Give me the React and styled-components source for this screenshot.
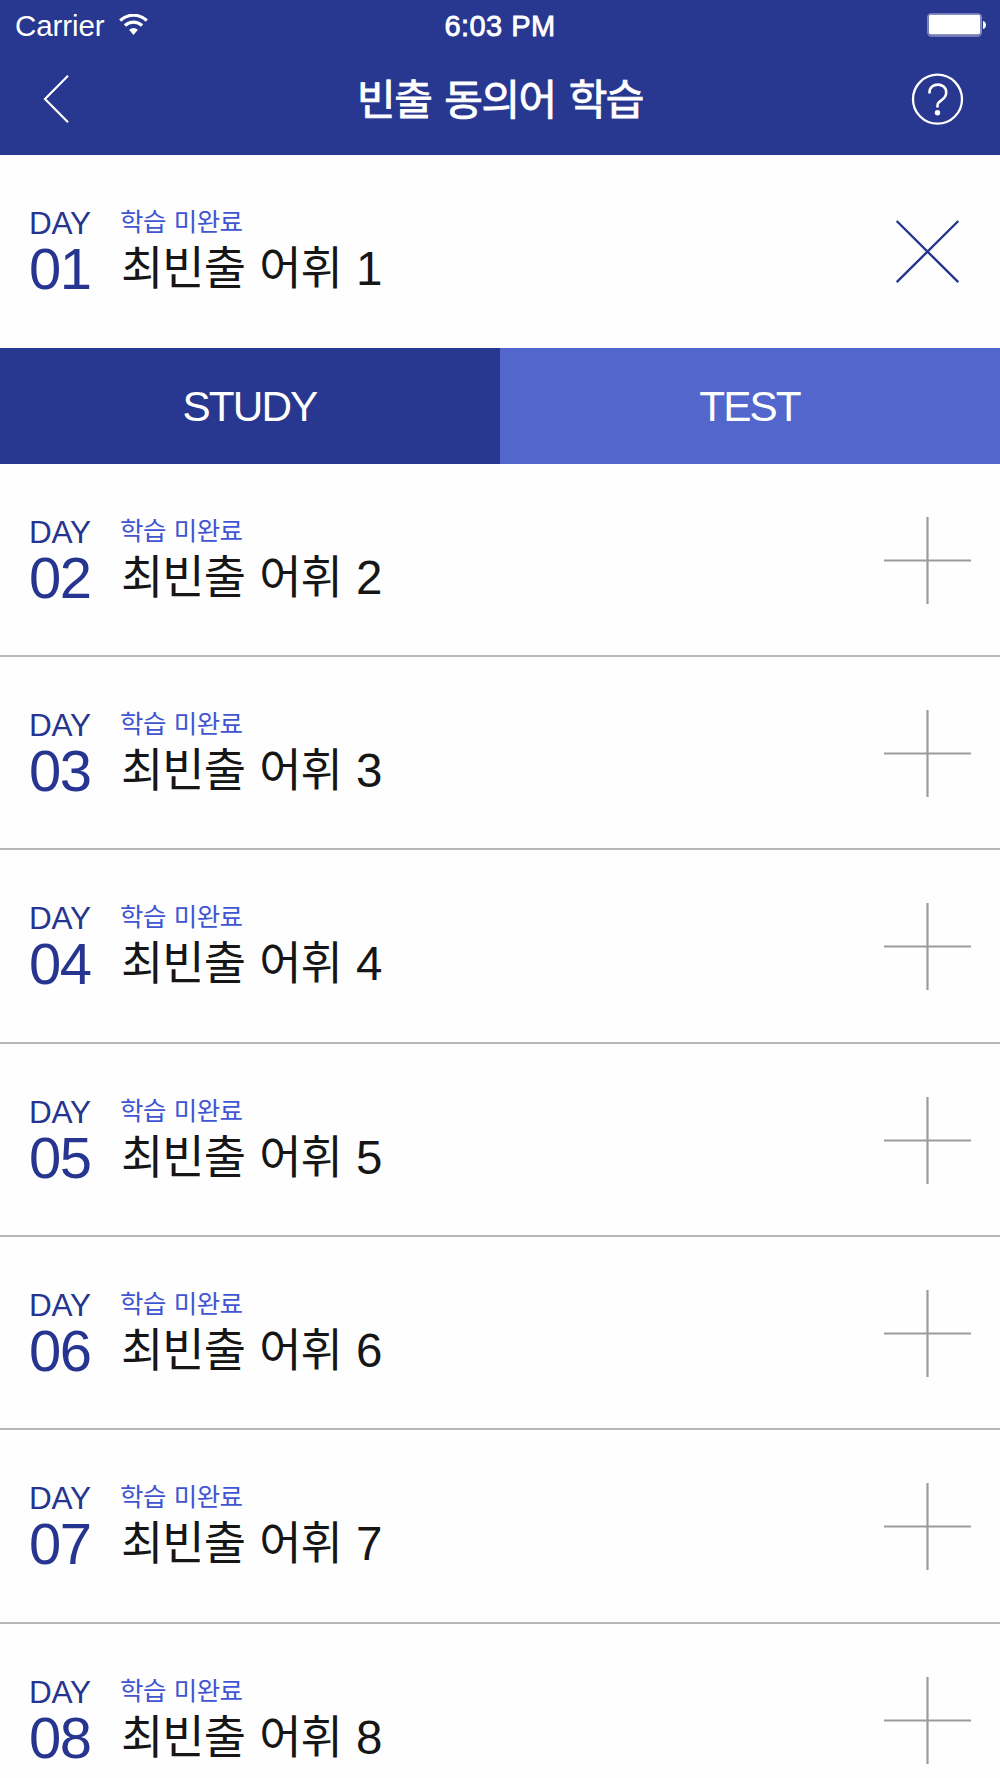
import React from "react";
import styled, { createGlobalStyle } from "styled-components";

const GlobalStyle = createGlobalStyle`
  * { box-sizing: border-box; }
  html, body { margin: 0; padding: 0; overflow: hidden; background: #fff; }
`;

const Screen = styled.div`
  width: 1000px;
  height: 1778px;
  overflow: hidden;
  background: #fefefe;
  font-family: "Liberation Sans", "Noto Sans CJK KR", sans-serif;
`;

const Header = styled.header`
  height: 154.6px;
  background: #28378f;
  color: #fff;
`;

const StatusBar = styled.div`
  display: grid;
  grid-template-columns: 1fr auto 1fr;
  align-items: center;
  height: 50px;
  padding: 0 13px 0 15px;
`;

const Carrier = styled.div`
  display: flex;
  align-items: center;
  gap: 15px;
  font-size: 29.5px;
  line-height: 34px;
  letter-spacing: -0.1px;
`;

const CarrierName = styled.span`
  padding-top: 1px;
`;

const Clock = styled.div`
  padding-top: 1px;
  margin-left: -2px;
  font-size: 29px;
  line-height: 34px;
  font-weight: 400;
  letter-spacing: 0.45px;
  -webkit-text-stroke: 0.8px #fff;
`;

const BatteryIcon = styled.svg`
  justify-self: end;
  display: block;
`;

const NavBar = styled.div`
  display: grid;
  grid-template-columns: 80px 1fr 80px;
  align-items: center;
  height: 98px;
  padding: 0 33px 0 39px;
`;

const PageTitle = styled.h1`
  margin: 0;
  padding: 4px 6px 0 0;
  text-align: center;
  font-size: 42px;
  line-height: 60px;
  font-weight: 400;
  letter-spacing: -1.4px;
  word-spacing: 2.5px;
  -webkit-text-stroke: 0.9px #fff;
`;

const IconButton = styled.button`
  display: flex;
  justify-content: ${(p) => (p.$end ? "flex-end" : "flex-start")};
  padding: 0;
  border: 0;
  background: none;
  color: inherit;
`;

const Row = styled.section`
  display: flex;
  height: 193.3px;
  padding: 53px 29px 0 29px;
  border-bottom: ${(p) => (p.$open ? "0" : "2px solid #b8b8b8")};
`;

const DayColumn = styled.div`
  width: 91px;
  margin-top: -2px;
  color: #26358f;
`;

const DayLabel = styled.div`
  font-size: 31.5px;
  line-height: 34px;
  letter-spacing: -0.2px;
`;

const DayNumber = styled.div`
  font-size: 58px;
  line-height: 58px;
  letter-spacing: -1.5px;
`;

const Lesson = styled.div`
  flex: 1;
`;

const LessonState = styled.div`
  font-size: 25.5px;
  line-height: 28px;
  letter-spacing: -0.5px;
  word-spacing: 1.2px;
  color: #3f55d2;
`;

const LessonTitle = styled.div`
  display: flex;
  align-items: flex-start;
  margin-top: 7px;
  padding-left: 1px;
  font-size: 46px;
  line-height: 50px;
  letter-spacing: -1px;
  word-spacing: 2.5px;
  color: #161616;
`;

const LessonIndex = styled.span`
  margin-left: 14px;
  padding-top: 1px;
  font-size: 47.5px;
`;

const ToggleButton = styled(IconButton)`
  align-self: flex-start;
`;

const Tabs = styled.div`
  display: grid;
  grid-template-columns: 1fr 1fr;
  height: 116px;
`;

const Tab = styled.button`
  padding: 2px 1px 0 0;
  border: 0;
  background: ${(p) => (p.$active ? "#28378f" : "#5266cb")};
  color: #fff;
  font-family: inherit;
  font-size: 42.3px;
  line-height: 48px;
  letter-spacing: -1.9px;
`;

const PlusIcon = () => (
  <svg width="87" height="87" viewBox="0 0 87 87" fill="none" stroke="#9b9b9b" strokeWidth="2.2">
    <path d="M43.5 0V87M0 43.5H87" />
  </svg>
);

const CloseIcon = () => (
  <svg width="87" height="87" viewBox="0 0 87 87" fill="none" stroke="#26358f" strokeWidth="2.4">
    <path d="M12.7 13L74.3 74.2M74.3 13L12.7 74.2" />
  </svg>
);

const lessons = [1, 2, 3, 4, 5, 6, 7, 8];

function LessonRow({ day, open }) {
  return (
    <Row $open={open}>
      <DayColumn>
        <DayLabel>DAY</DayLabel>
        <DayNumber>{String(day).padStart(2, "0")}</DayNumber>
      </DayColumn>
      <Lesson>
        <LessonState>학습 미완료</LessonState>
        <LessonTitle>
          <span>최빈출 어휘</span>
          <LessonIndex>{day}</LessonIndex>
        </LessonTitle>
      </Lesson>
      <ToggleButton>{open ? <CloseIcon /> : <PlusIcon />}</ToggleButton>
    </Row>
  );
}

export default function App() {
  return (
    <Screen>
      <GlobalStyle />
      <Header>
        <StatusBar>
          <Carrier>
            <CarrierName>Carrier</CarrierName>
            <svg width="29" height="22" viewBox="0 0 29 22">
              <g fill="none" stroke="#fff" strokeWidth="3.2">
                <path d="M1.2 6.5C9 -0.6 20 -0.6 27.8 6.5" />
                <path d="M5.9 11.5C11 6.9 18 6.9 23.1 11.5" />
              </g>
              <path d="M10.1 15.8Q14.5 12 18.9 15.8L14.5 21Z" fill="#fff" />
            </svg>
          </Carrier>
          <Clock>6:03 PM</Clock>
          <BatteryIcon width="60" height="24" viewBox="0 0 60 24">
            <rect x="0.8" y="0.8" width="53.5" height="22.2" rx="3.5" fill="none" stroke="#8b93c4" strokeWidth="1.3" />
            <rect x="1.8" y="1.8" width="51.5" height="19.8" rx="2" fill="#fff" />
            <path d="M56 8C60 9 60 15 56 16Z" fill="#fff" />
          </BatteryIcon>
        </StatusBar>
        <NavBar>
          <IconButton>
            <svg width="32" height="54" viewBox="0 0 32 54" fill="none" stroke="#fff" strokeWidth="2.2">
              <path d="M29 3.8L6 27L29 50.2" />
            </svg>
          </IconButton>
          <PageTitle>빈출 동의어 학습</PageTitle>
          <IconButton $end>
            <svg width="58" height="54" viewBox="0 0 58 54" fill="none" stroke="#fff">
              <circle cx="28.5" cy="27.2" r="24.5" strokeWidth="2.3" />
              <path d="M20.5 21.5V20.5C20.5 10 37.2 10 37.2 20.5C37.2 29 28.5 27.5 28.5 33.5V35.5" strokeWidth="2.6" />
              <circle cx="28.5" cy="40.8" r="2.7" fill="#fff" stroke="none" />
            </svg>
          </IconButton>
        </NavBar>
      </Header>
      <LessonRow day={lessons[0]} open />
      <Tabs>
        <Tab $active>STUDY</Tab>
        <Tab>TEST</Tab>
      </Tabs>
      {lessons.slice(1).map((day) => (
        <LessonRow key={day} day={day} />
      ))}
    </Screen>
  );
}
